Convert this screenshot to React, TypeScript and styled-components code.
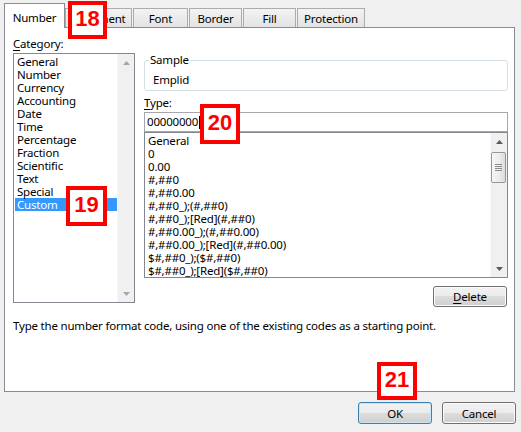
import React from "react";
import styled, { createGlobalStyle } from "styled-components";

const GlobalStyle = createGlobalStyle`
  html, body { margin: 0; padding: 0; background: #f0f0f0; }
  body {
    font-family: "Noto Sans", "Open Sans", "DejaVu Sans", sans-serif;
    font-size: 11.5px;
    letter-spacing: -0.2px;
    color: #000;
  }
  *, *::before, *::after { box-sizing: border-box; }
`;

const Dialog = styled.div`
  position: relative;
  width: 521px;
  height: 432px;
  overflow: hidden;
  background: #f0f0f0;
  display: flex;
  flex-direction: column;
`;

const TabRow = styled.div`
  position: relative;
  z-index: 1;
  display: flex;
  align-items: flex-end;
  height: 27px;
  padding-left: 4px;
  flex-shrink: 0;
`;

const Tab = styled.div<{ $active?: boolean; $width: number; $gap?: number }>`
  width: ${(p) => p.$width}px;
  margin-left: ${(p) => p.$gap ?? 0}px;
  height: ${(p) => (p.$active ? 25 : 19)}px;
  margin-bottom: ${(p) => (p.$active ? -1 : 0)}px;
  padding-top: ${(p) => (p.$active ? 7 : 3)}px;
  border: 1px solid ${(p) => (p.$active ? "#898c95" : "#acacac")};
  border-bottom: none;
  background: ${(p) =>
    p.$active ? "#ffffff" : "linear-gradient(#f3f3f3, #e3e3e3)"};
  text-align: center;
  line-height: 14px;
  white-space: nowrap;
  flex-shrink: 0;
`;

const Panel = styled.div`
  width: 511px;
  height: 365px;
  margin-left: 4px;
  background: #ffffff;
  border: 1px solid #898c95;
  padding: 9px 6px 0 8px;
  display: flex;
  flex-direction: column;
  flex-shrink: 0;
`;

const ContentGrid = styled.div`
  display: grid;
  grid-template-columns: 122px 364px;
  column-gap: 9px;
  align-items: start;
`;

const Column = styled.div`
  display: flex;
  flex-direction: column;
  min-width: 0;
`;

const FieldLabel = styled.div<{ $mt?: number }>`
  line-height: 14px;
  margin-top: ${(p) => p.$mt ?? 0}px;
  margin-bottom: 2px;
`;

const U = styled.span`
  text-decoration: underline;
  text-underline-offset: 2px;
`;

const ListBox = styled.div<{ $height: number }>`
  height: ${(p) => p.$height}px;
  border: 1px solid #828790;
  background: #ffffff;
  display: flex;
  flex-shrink: 0;
`;

const ListItems = styled.div<{ $pt: number }>`
  flex: 1;
  min-width: 0;
  padding: ${(p) => p.$pt}px 0 0 1px;
  overflow: hidden;
`;

const ListItem = styled.div<{ $selected?: boolean }>`
  height: 13px;
  line-height: 13px;
  padding-left: 2px;
  white-space: nowrap;
  background: ${(p) => (p.$selected ? "#3399ff" : "transparent")};
  color: ${(p) => (p.$selected ? "#ffffff" : "#000000")};
`;

const ScrollBar = styled.div`
  width: 17px;
  flex-shrink: 0;
  background: #f0f0f0;
  border-left: 1px solid #f7f7f7;
  display: flex;
  flex-direction: column;
`;

const ScrollButton = styled.div`
  height: 17px;
  flex-shrink: 0;
  display: flex;
  align-items: center;
  justify-content: center;
`;

const ScrollTrack = styled.div`
  flex: 1;
  padding: 2px 1px 0 0;
`;

const Thumb = styled.div`
  height: 31px;
  border: 1px solid #979797;
  border-radius: 2px;
  background: linear-gradient(90deg, #f6f6f6, #ececec 55%, #dcdcdc);
  display: flex;
  align-items: center;
  justify-content: center;
`;

const SampleGroup = styled.fieldset`
  margin: 16px 0 0;
  min-width: 0;
  border: 1px solid #d5dfe5;
  border-radius: 3px;
  padding: 6px 8px 3px;
`;

const SampleLegend = styled.legend`
  padding: 0 1px;
  margin-left: -4px;
  line-height: 14px;
`;

const SampleValue = styled.div`
  line-height: 14px;
`;

const TypeInput = styled.div`
  height: 20px;
  border: 1px solid #a5a7ad;
  padding-left: 2px;
  display: flex;
  align-items: center;
  line-height: 14px;
  background: #ffffff;
`;

const Caret = styled.span`
  display: inline-block;
  width: 1px;
  height: 13px;
  margin-left: 1px;
  background: #000000;
`;

const Button = styled.button<{ $default?: boolean; $width?: number; $height?: number }>`
  width: ${(p) => p.$width ?? 74}px;
  height: ${(p) => p.$height ?? 22}px;
  padding: 0;
  font: inherit;
  letter-spacing: inherit;
  color: #000;
  border: 1px solid ${(p) => (p.$default ? "#3c7fb1" : "#707070")};
  border-radius: 3px;
  background: linear-gradient(#f2f2f2 0%, #ebebeb 49%, #dddddd 50%, #cfcfcf 100%);
  box-shadow: inset 0 0 0 1px ${(p) => (p.$default ? "#c8e6f8" : "#fbfbfb")};
  flex-shrink: 0;
`;

const DeleteButton = styled(Button)`
  align-self: flex-end;
  margin-top: 8px;
  margin-right: 1px;
`;

const Description = styled.div`
  margin-top: 12px;
  line-height: 14px;
  white-space: nowrap;
`;

const ButtonRow = styled.div`
  display: flex;
  justify-content: flex-end;
  gap: 10px;
  margin-top: 10px;
  padding-right: 5px;
`;

const Badge = styled.div<{ $x: number; $y: number; $w: number; $h: number }>`
  position: absolute;
  left: ${(p) => p.$x}px;
  top: ${(p) => p.$y}px;
  width: ${(p) => p.$w}px;
  height: ${(p) => p.$h}px;
  z-index: 10;
  border: 4px solid #ff0000;
  background: #ffffff;
  color: #ff0000;
  font-family: "Liberation Sans", Arial, sans-serif;
  font-weight: bold;
  font-size: 22px;
  letter-spacing: 0;
  line-height: 1;
  display: flex;
  align-items: center;
  justify-content: center;
  padding-bottom: 2px;
`;

const Arrow = ({ dir, color }: { dir: "up" | "down"; color: string }) => (
  <svg width="7" height="4" viewBox="0 0 7 4" aria-hidden="true">
    <path d={dir === "up" ? "M3.5 0 L7 4 L0 4 Z" : "M0 0 L7 0 L3.5 4 Z"} fill={color} />
  </svg>
);

const Grip = () => (
  <svg width="7" height="7" viewBox="0 0 7 7" aria-hidden="true">
    <rect x="0" y="0" width="7" height="1" fill="#8c8c8c" />
    <rect x="0" y="2" width="7" height="1" fill="#8c8c8c" />
    <rect x="0" y="4" width="7" height="1" fill="#8c8c8c" />
    <rect x="0" y="6" width="7" height="1" fill="#8c8c8c" />
  </svg>
);

const tabs = [
  { label: "Number", width: 61, gap: 0, active: true },
  { label: "Alignment", width: 67, gap: 0 },
  { label: "Font", width: 55, gap: 1 },
  { label: "Border", width: 53, gap: 1 },
  { label: "Fill", width: 53, gap: 1 },
  { label: "Protection", width: 68, gap: 1 },
];

const categories = [
  "General",
  "Number",
  "Currency",
  "Accounting",
  "Date",
  "Time",
  "Percentage",
  "Fraction",
  "Scientific",
  "Text",
  "Special",
  "Custom",
];

const formats = [
  "General",
  "0",
  "0.00",
  "#,##0",
  "#,##0.00",
  "#,##0_);(#,##0)",
  "#,##0_);[Red](#,##0)",
  "#,##0.00_);(#,##0.00)",
  "#,##0.00_);[Red](#,##0.00)",
  "$#,##0_);($#,##0)",
  "$#,##0_);[Red]($#,##0)",
];

export default function App() {
  return (
    <>
      <GlobalStyle />
      <Dialog>
        <TabRow>
          {tabs.map((t) => (
            <Tab key={t.label} $active={t.active} $width={t.width} $gap={t.gap}>
              {t.label}
            </Tab>
          ))}
        </TabRow>
        <Panel>
          <ContentGrid>
            <Column>
              <FieldLabel>
                <U>C</U>ategory:
              </FieldLabel>
              <ListBox $height={250}>
                <ListItems $pt={1}>
                  {categories.map((c) => (
                    <ListItem key={c} $selected={c === "Custom"}>
                      {c}
                    </ListItem>
                  ))}
                </ListItems>
                <ScrollBar>
                  <ScrollButton>
                    <Arrow dir="up" color="#a6a6a6" />
                  </ScrollButton>
                  <ScrollTrack />
                  <ScrollButton>
                    <Arrow dir="down" color="#a6a6a6" />
                  </ScrollButton>
                </ScrollBar>
              </ListBox>
            </Column>
            <Column>
              <SampleGroup>
                <SampleLegend>Sample</SampleLegend>
                <SampleValue>Emplid</SampleValue>
              </SampleGroup>
              <FieldLabel $mt={5}>
                <U>T</U>ype:
              </FieldLabel>
              <TypeInput>
                00000000
                <Caret />
              </TypeInput>
              <ListBox $height={146}>
                <ListItems $pt={1}>
                  {formats.map((f) => (
                    <ListItem key={f}>{f}</ListItem>
                  ))}
                </ListItems>
                <ScrollBar>
                  <ScrollButton>
                    <Arrow dir="up" color="#5a5a5a" />
                  </ScrollButton>
                  <ScrollTrack>
                    <Thumb>
                      <Grip />
                    </Thumb>
                  </ScrollTrack>
                  <ScrollButton>
                    <Arrow dir="down" color="#5a5a5a" />
                  </ScrollButton>
                </ScrollBar>
              </ListBox>
              <DeleteButton $height={21}>
                <U>D</U>elete
              </DeleteButton>
            </Column>
          </ContentGrid>
          <Description>
            Type the number format code, using one of the existing codes as a starting point.
          </Description>
        </Panel>
        <ButtonRow>
          <Button $default>OK</Button>
          <Button>Cancel</Button>
        </ButtonRow>
        <Badge $x={68} $y={1} $w={39} $h={38}>18</Badge>
        <Badge $x={66} $y={186} $w={41} $h={40}>19</Badge>
        <Badge $x={200} $y={104} $w={40} $h={40}>20</Badge>
        <Badge $x={377} $y={362} $w={40} $h={38}>21</Badge>
      </Dialog>
    </>
  );
}
